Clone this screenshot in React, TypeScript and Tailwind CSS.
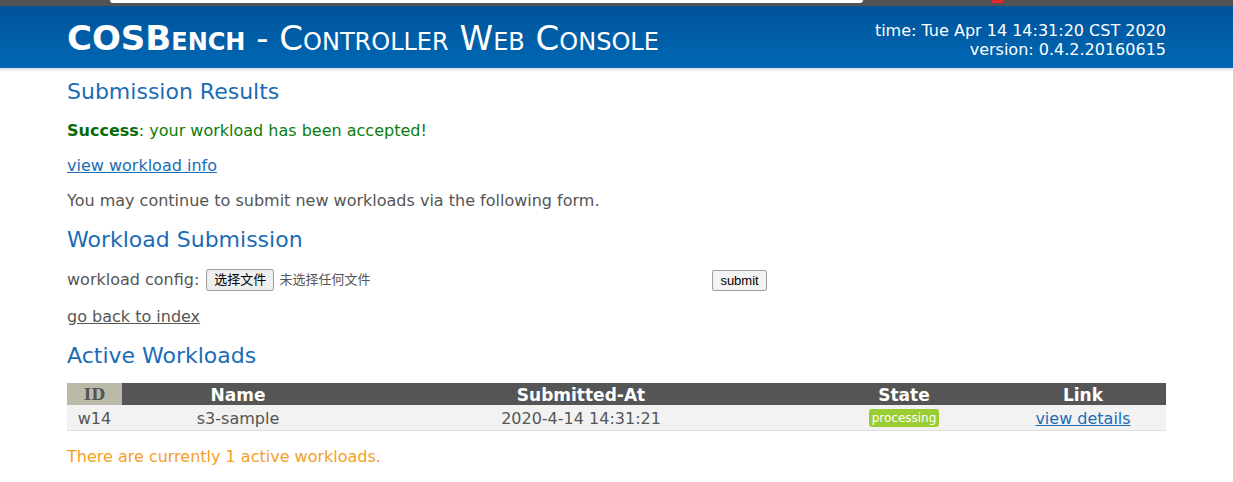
import React from 'react';

const SANS = "font-['DejaVu_Sans','Noto_Sans_CJK_SC',sans-serif]";

interface Workload {
  id: string;
  name: string;
  submittedAt: string;
  state: string;
}

const workloads: Workload[] = [
  { id: 'w14', name: 's3-sample', submittedAt: '2020-4-14 14:31:21', state: 'processing' },
];

const Header: React.FC = () => (
  <div>
    <div className="relative h-[6px] bg-[#525252]">
      <div className="absolute left-[110px] top-0 h-[3px] w-[753px] rounded-b-[3px] bg-white" />
      <div className="absolute left-[992px] top-0 h-[3px] w-[11px] bg-[#e5262a]" />
    </div>
    <div className="h-[62px] bg-gradient-to-b from-[#00539a] to-[#0068b4]">
      <div className="flex h-full items-center justify-between px-[67px]">
        <h1 className="pt-[2px] text-[34px] leading-none text-white [font-variant:small-caps]">
          <span className="font-bold">COSBench</span>
          <span> - Controller Web Console</span>
        </h1>
        <div className="pt-[5px] text-right text-[16px] leading-[19px] text-white">
          <div>time: Tue Apr 14 14:31:20 CST 2020</div>
          <div>version: 0.4.2.20160615</div>
        </div>
      </div>
    </div>
    <div className="h-[4px] bg-gradient-to-b from-[#dcdcdc] to-white" />
  </div>
);

const SectionTitle: React.FC<{ children: React.ReactNode; className?: string }> = ({ children, className = '' }) => (
  <h2 className={`text-[22px] leading-[30px] text-[#1a6cb6] ${className}`}>{children}</h2>
);

const WorkloadTable: React.FC = () => (
  <table className="w-full border-collapse text-[16px]">
    <thead>
      <tr className="bg-[#555555] text-[17px] font-bold leading-[20px] text-white">
        <th className="w-[55px] bg-[#bbbaa8] pt-[2px] font-['DejaVu_Serif',serif] text-[16px] text-[#555]">ID</th>
        <th className="w-[232px] pt-[2px]">Name</th>
        <th className="w-[454px] pt-[2px]">Submitted-At</th>
        <th className="w-[192px] pt-[2px]">State</th>
        <th className="pt-[2px]">Link</th>
      </tr>
    </thead>
    <tbody>
      {workloads.map((w) => (
        <tr key={w.id} className="border-b border-[#dedede] bg-[#f2f2f2] text-center leading-[20px] text-[#555]">
          <td className="pb-[1px] pt-[4px]">{w.id}</td>
          <td className="pb-[1px] pt-[4px]">{w.name}</td>
          <td className="pb-[1px] pt-[4px]">{w.submittedAt}</td>
          <td className="pb-[1px] pt-[4px]">
            <span className="inline-block rounded-[3px] bg-[#9acd32] px-[3px] align-top text-[12px] leading-[18px] text-white">
              {w.state}
            </span>
          </td>
          <td className="pb-[1px] pt-[4px]">
            <a href="#" className="text-[#1a6cb6] underline">view details</a>
          </td>
        </tr>
      ))}
    </tbody>
  </table>
);

export default function App() {
  return (
    <div className={`min-h-[482px] bg-white ${SANS}`}>
      <Header />
      <div className="px-[67px] text-[16px] leading-[20px] text-[#555]">
        <SectionTitle className="mt-[5px]">Submission Results</SectionTitle>
        <p className="mt-[14px] text-[#0a7d0a]">
          <b className="text-[#076b07]">Success</b>: your workload has been accepted!
        </p>
        <p className="mt-[15px]">
          <a href="#" className="text-[#1a6cb6] underline">view workload info</a>
        </p>
        <p className="mt-[15px]">You may continue to submit new workloads via the following form.</p>

        <SectionTitle className="mt-[14px]">Workload Submission</SectionTitle>
        <div className="mt-[13px] flex h-[24px] items-center">
          <span>workload config:</span>
          <button className="ml-[7px] h-[22px] rounded-[2px] border border-[#a0a0a0] bg-[#efefef] px-[7px] text-[13px] leading-[20px] text-black">
            选择文件
          </button>
          <span className="ml-[5px] w-[433px] text-[13px] text-[#555]">未选择任何文件</span>
          <button className="h-[21px] rounded-[2px] border border-[#a0a0a0] bg-[#f3f3f3] px-[7px] font-['Liberation_Sans',sans-serif] text-[13px] leading-[19px] text-black">
            submit
          </button>
        </div>
        <p className="mt-[15px]">
          <a href="#" className="text-[#555] underline">go back to index</a>
        </p>

        <SectionTitle className="mt-[14px]">Active Workloads</SectionTitle>
        <div className="mt-[12px]">
          <WorkloadTable />
        </div>
        <p className="mt-[16px] text-[#f5a01f]">There are currently 1 active workloads.</p>
      </div>
    </div>
  );
}
